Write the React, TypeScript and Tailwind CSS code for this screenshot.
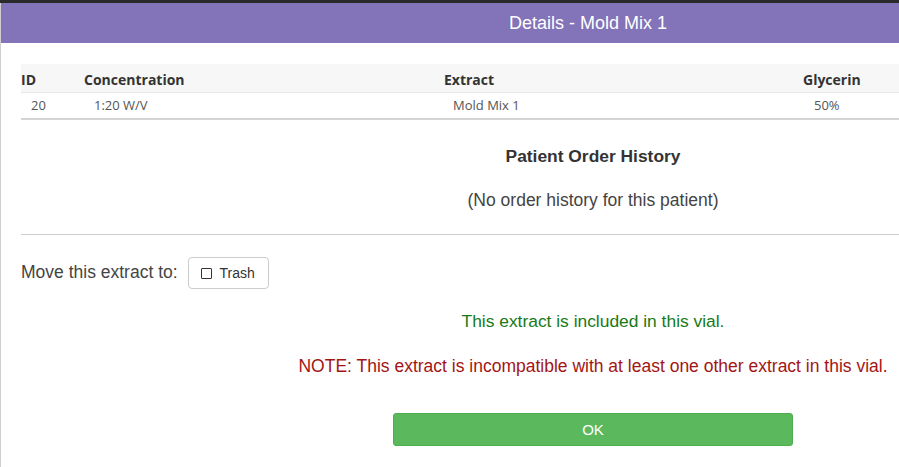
export default function App() {
  return (
    <div className="w-[899px] h-[467px] overflow-hidden bg-white relative">
      <div className="h-[3px] bg-[#2a2a2a]" />
      <div className="w-[1185px] h-[464px] border-l border-[#cfcfcf] bg-white font-['Liberation_Sans',Arial,sans-serif]">
        {/* header */}
        <div className="h-[40px] bg-[#8373b9] flex items-center justify-center pr-[10px]">
          <span className="text-white text-[18px] leading-[20px]">Details - Mold Mix 1</span>
        </div>

        <div className="px-[20px] pt-[21px]">
          {/* table */}
          <div className="font-['Open_Sans',sans-serif]">
            <div className="flex h-[29px] pt-[3px] items-center bg-[#f7f7f7] border-b border-[#e8e8e8] text-[14px] font-bold text-[#333]">
              <div className="w-[63px]">ID</div>
              <div className="w-[360px]">Concentration</div>
              <div className="w-[359px]">Extract</div>
              <div>Glycerin</div>
            </div>
            <div className="flex h-[27px] items-center border-b-2 border-[#d4d4d4] text-[13px] text-[#555]">
              <div className="w-[63px] pl-[10px]">20</div>
              <div className="w-[360px] pl-[10px]">1:20 W/V</div>
              <div className="w-[359px] pl-[9px]">Mold Mix 1</div>
              <div className="pl-[11px]">50%</div>
            </div>
          </div>

          {/* order history */}
          <div className="flex flex-col items-center pt-[26px] pb-[24px] border-b border-[#cccccc]">
            <div className="text-[17.4px] leading-[20px] font-bold text-[#333]">Patient Order History</div>
            <div className="mt-[24px] text-[17.5px] leading-[20px] text-[#444]">(No order history for this patient)</div>
          </div>

          {/* move */}
          <div className="flex items-center h-[32px] mt-[22px] text-[17.5px] leading-[20px] text-[#444]">
            <span className="-mt-[3px]">Move this extract to:</span>
            <button className="ml-[10px] h-[32px] w-[81px] flex items-center justify-center gap-[7px] border border-[#cccccc] rounded-[4px] bg-white text-[14px] leading-[16px] text-[#333]">
              <span className="inline-block w-[11px] h-[11px] border border-[#333] rounded-[1px]" />
              Trash
            </button>
          </div>

          {/* status */}
          <div className="flex flex-col items-center">
            <div className="mt-[22px] text-[17.4px] leading-[20px] text-[#177a17]">This extract is included in this vial.</div>
            <div className="mt-[25px] text-[17.5px] leading-[20px] text-[#a31515]">
              NOTE: This extract is incompatible with at least one other extract in this vial.
            </div>
            <button className="mt-[37px] w-[400px] h-[33px] rounded-[3px] bg-[#5cb85c] border border-[#4cae4c] text-white text-[15px] leading-[20px]">
              OK
            </button>
          </div>
        </div>
      </div>
    </div>
  );
}
